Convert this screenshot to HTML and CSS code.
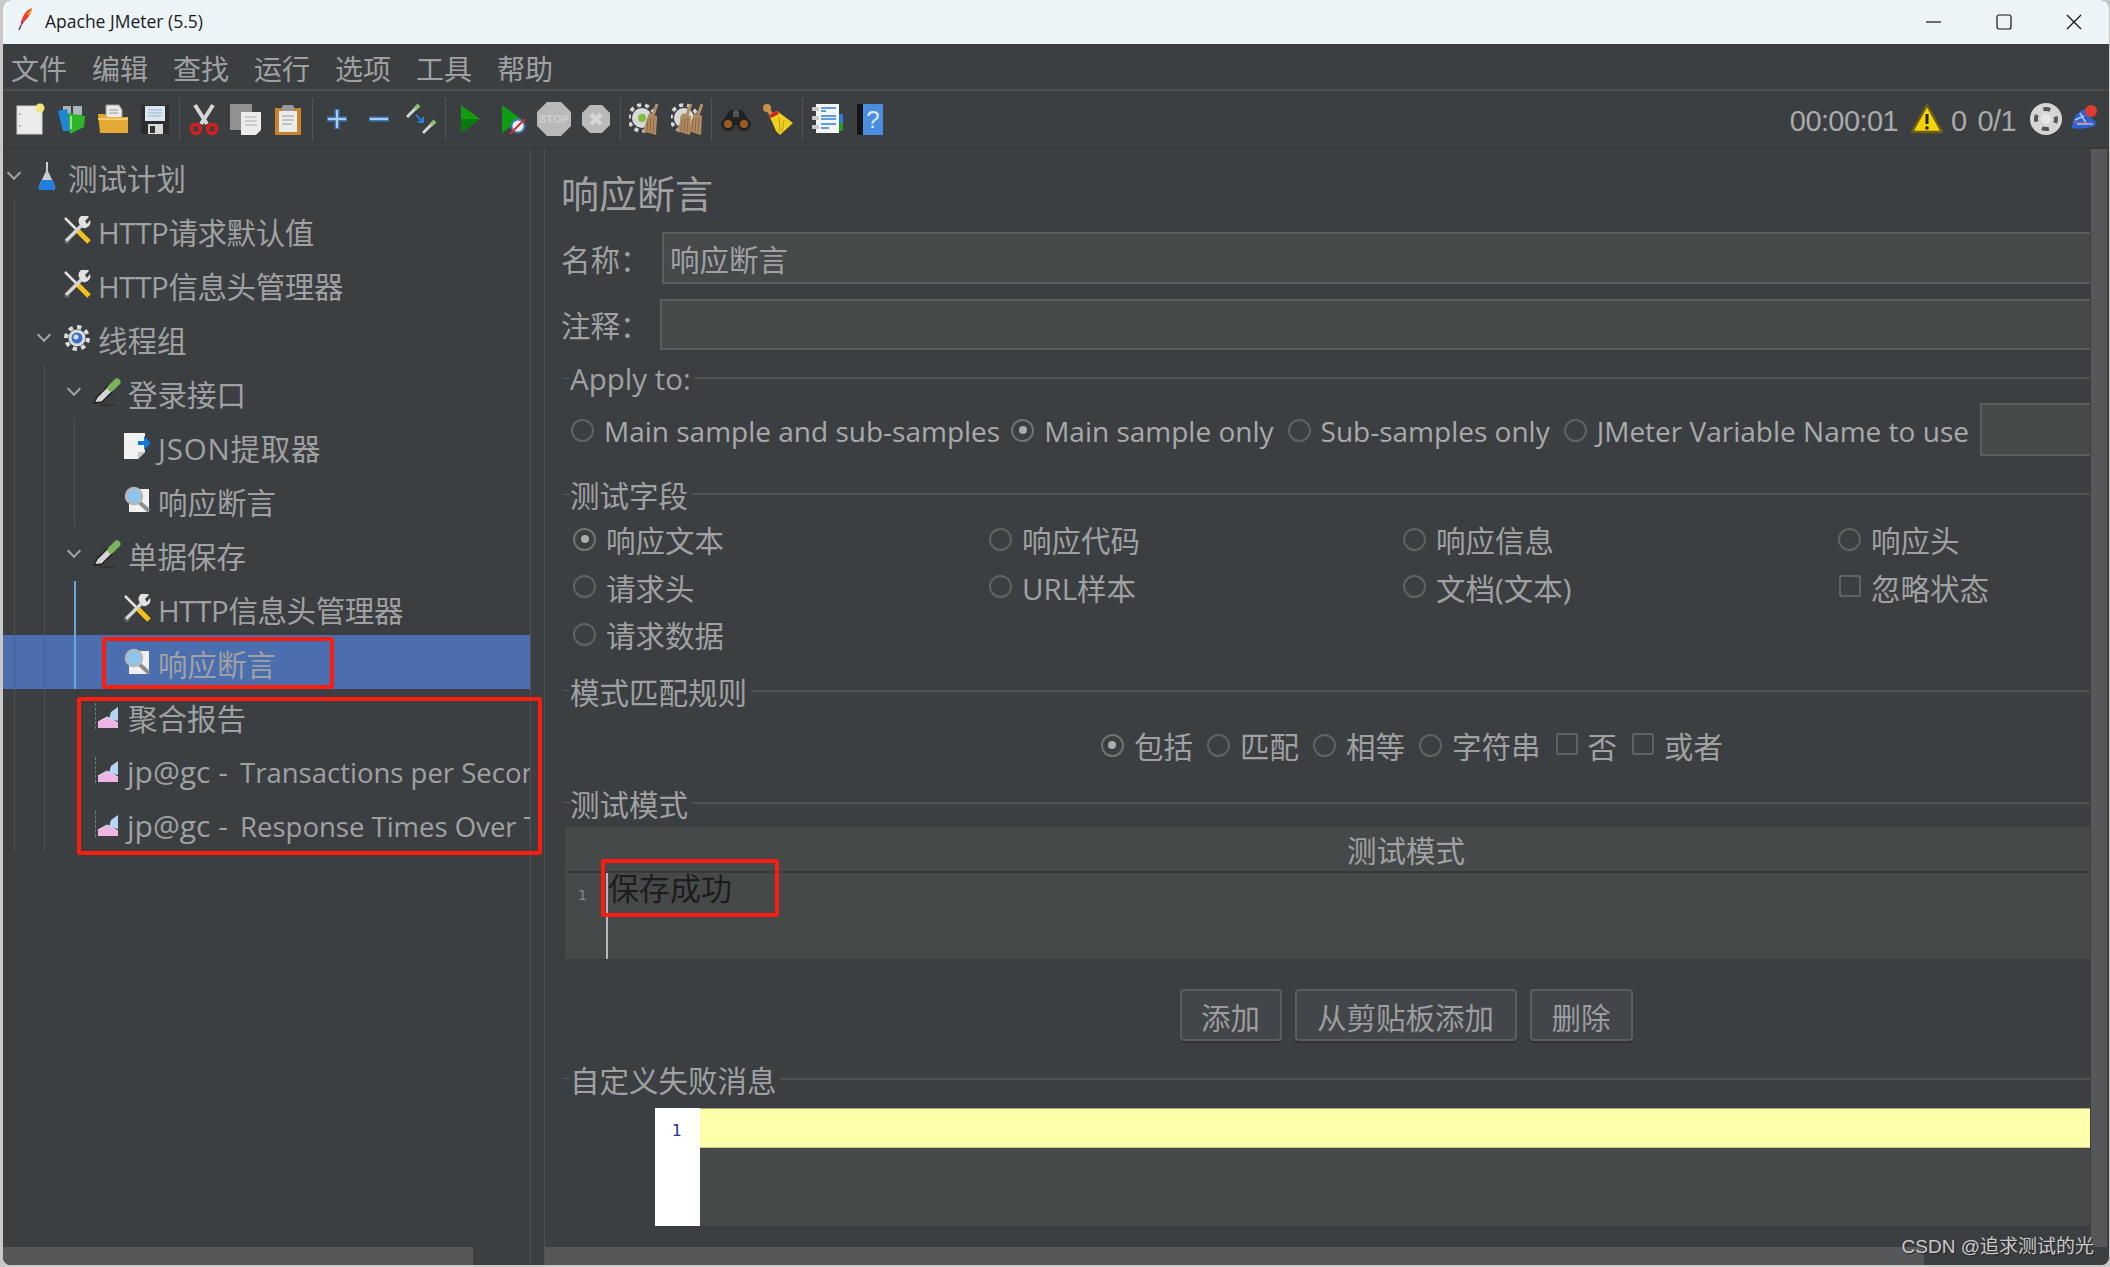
FILE: index.html
```html
<!DOCTYPE html>
<html lang="zh-CN">
<head>
    <meta charset="UTF-8">
    <title>Apache JMeter (5.5)</title>
    <link rel="stylesheet" href="styles.css">
</head>
<body>
    <!-- shared icons -->
    <svg class="defs" aria-hidden="true">
        <symbol id="i-wrench" viewBox="0 0 28 28">
            <path d="M2 2 L14 14" stroke="#e2e2e2" stroke-width="2.5"/>
            <path d="M13 13 L26 26" stroke="#f2c21a" stroke-width="5"/>
            <path d="M3 25 L19 9" stroke="#d4d4d4" stroke-width="3.5"/>
            <path d="M17 9 A6 6 0 0 1 26 1 L22 5 L24 8 L27 4 A6 6 0 0 1 20 12 Z" fill="#e2e2e2"/>
            <path d="M1 25 L4 28 L7 24" stroke="#666" stroke-width="1.5" fill="none"/>
        </symbol>
        <symbol id="i-pipette" viewBox="0 0 28 28">
            <path d="M1 25 L4 19 L15 8 L20 13 L9 24 Z" fill="#d5d5d5" stroke="#1f1f1f" stroke-width="1.5"/>
            <path d="M18 10 L24 4" stroke="#79b35c" stroke-width="7" stroke-linecap="round"/>
            <path d="M6 27 H22" stroke="#2f3133" stroke-width="2"/>
        </symbol>
        <symbol id="i-assert" viewBox="0 0 28 28">
            <path d="M6 3 H26 V26 H6 Z" fill="#f1f1f1"/>
            <path d="M15 15 L26 25" stroke="#8b8d8f" stroke-width="4"/>
            <circle cx="11" cy="10" r="8" fill="#8ec5ef" stroke="#b4b8bb" stroke-width="2.5"/>
        </symbol>
        <symbol id="i-graph" viewBox="0 0 22 22">
            <path d="M1 21 L1 15 L10 10 L21 16 L21 21 Z" fill="#eeb4e4"/>
            <path d="M1 15 L10 10 L21 16" stroke="#f6dcf1" stroke-width="1" fill="none"/>
            <path d="M12 12 L14 5 L21 0 L21 14 Z" fill="#b5d5f3"/>
        </symbol>
        <symbol id="i-gear-bg" viewBox="0 0 32 32">
            <circle cx="13" cy="15" r="10" fill="#d9d9d9"/>
            <circle cx="13" cy="15" r="13" fill="none" stroke="#d9d9d9" stroke-width="3.5" stroke-dasharray="4 4"/>
            <circle cx="13" cy="15" r="4" fill="#7fbf3a"/>
        </symbol>
        <symbol id="i-broom-small" viewBox="0 0 16 32">
            <path d="M14 1 L10 12" stroke="#b08e66" stroke-width="3"/>
            <path d="M6 10 L14 13 L13 32 L0 28 Z" fill="#b08a60"/>
            <path d="M5 16 L4 28 M8 15 L7 29 M11 15 L10 30" stroke="#8a6a45" stroke-width="1"/>
        </symbol>
    </svg>

    <div class="window">
        <header class="titlebar">
            <svg class="feather" viewBox="0 0 16 24">
                <path d="M15 1 C9 3 6 8 4 15 L7 15 C11 11 14 7 15 1 Z" fill="#e8402a"/>
                <path d="M15 1 C13 3 11 5 10 8 L13 8 C14 6 15 4 15 1 Z" fill="#f59a23"/>
                <path d="M4 15 L7 15 L4 19 Z" fill="#b3257a"/>
                <path d="M4 18 L2 23" stroke="#5b3a99" stroke-width="1.5"/>
            </svg>
            <span class="title-text">Apache JMeter (5.5)</span>
            <div class="win-controls">
                <svg class="win-btn" viewBox="0 0 16 16"><path d="M0 8 H15" stroke="#111" stroke-width="1.2"/></svg>
                <svg class="win-btn" viewBox="0 0 16 16"><rect x="1" y="1" width="14" height="14" rx="2" fill="none" stroke="#111" stroke-width="1.2"/></svg>
                <svg class="win-btn" viewBox="0 0 16 16"><path d="M1 1 L15 15 M15 1 L1 15" stroke="#111" stroke-width="1.2"/></svg>
            </div>
        </header>

        <nav class="menubar">
            <span>文件</span><span>编辑</span><span>查找</span><span>运行</span><span>选项</span><span>工具</span><span>帮助</span>
        </nav>

        <div class="toolbar">
            <div class="tb-group">
                <svg class="tb-icon" viewBox="0 0 32 32"><rect x="4" y="3" width="25" height="28" fill="#ececec" stroke="#cfcfcf"/><circle cx="7" cy="11" r="1" fill="#aaa"/><circle cx="7" cy="23" r="1" fill="#aaa"/><circle cx="27" cy="5" r="4.5" fill="#f3e67a"/></svg>
                <svg class="tb-icon" viewBox="0 0 32 32"><path d="M8 3 H16 V12 H8 Z M18 3 H27 V12 H18 Z" fill="#a9b6bd"/><path d="M3 8 L12 6 L16 28 L8 28 Z" fill="#1f86d6"/><path d="M13 10 L30 13 L29 24 L15 31 Z" fill="#2fb52a"/><path d="M16 13 V26" stroke="#bdf0a8" stroke-width="1.5"/></svg>
                <svg class="tb-icon" viewBox="0 0 32 32"><path d="M9 2 H22 L25 7 V16 H9 Z" fill="#e9e9e9" stroke="#9a9a9a"/><path d="M12 7 H21 M12 10 H21" stroke="#999"/><path d="M1 11 H8 L10 14 H31 V30 H3 Z" fill="#e5a935"/><path d="M1 16 H31" stroke="#f3cb6b" stroke-width="2"/></svg>
                <svg class="tb-icon" viewBox="0 0 32 32"><path d="M2 2 H30 V31 H2 Z" fill="#2d2d2d"/><rect x="6" y="3" width="20" height="15" fill="#dfe7ee"/><path d="M9 7 H23 M9 10 H23 M9 13 H23" stroke="#8fb3d9"/><rect x="9" y="21" width="15" height="10" fill="#d9d9d9"/><rect x="11" y="23" width="5" height="7" fill="#333"/></svg>
            </div>
            <span class="tb-sep"></span>
            <div class="tb-group">
                <svg class="tb-icon" viewBox="0 0 32 32"><path d="M7 2 L19 21 M25 2 L13 21" stroke="#d6d6d6" stroke-width="4"/><circle cx="8" cy="26" r="4.5" fill="none" stroke="#d81f1f" stroke-width="3.5"/><circle cx="24" cy="26" r="4.5" fill="none" stroke="#d81f1f" stroke-width="3.5"/></svg>
                <svg class="tb-icon" viewBox="0 0 32 32"><rect x="0" y="1" width="22" height="26" fill="#8f9192"/><path d="M11 9 H31 V27 L26 32 H11 Z" fill="#ececec"/><path d="M15 14 H27 M15 18 H27 M15 22 H27" stroke="#aaa"/></svg>
                <svg class="tb-icon" viewBox="0 0 32 32"><rect x="3" y="5" width="26" height="27" fill="#c9842b"/><rect x="7" y="8" width="18" height="21" fill="#ececec"/><rect x="10" y="2" width="12" height="6" rx="2" fill="#9a9a9a"/><path d="M10 13 H22 M10 17 H22 M10 21 H20" stroke="#999"/></svg>
            </div>
            <span class="tb-sep"></span>
            <div class="tb-group">
                <svg class="tb-icon" viewBox="0 0 32 32"><path d="M16 6 V26 M6 16 H26" stroke="#3f78b8" stroke-width="5"/><path d="M16 7 V25 M7 16 H25" stroke="#a9cdf0" stroke-width="2"/></svg>
                <svg class="tb-icon" viewBox="0 0 32 32"><path d="M6 16 H26" stroke="#3f78b8" stroke-width="5"/><path d="M7 16 H25" stroke="#a9cdf0" stroke-width="2"/></svg>
                <svg class="tb-icon" viewBox="0 0 32 32"><path d="M2 14 L12 4" stroke="#d5d5d5" stroke-width="3"/><path d="M10 6 L14 2" stroke="#8cc06a" stroke-width="4"/><path d="M18 30 L28 20" stroke="#d5d5d5" stroke-width="3"/><path d="M26 22 L30 18" stroke="#8cc06a" stroke-width="4"/><path d="M11 12 L18 19 M18 14 V19 H13" stroke="#2a7de1" stroke-width="2" fill="none"/></svg>
            </div>
            <span class="tb-sep"></span>
            <div class="tb-group">
                <svg class="tb-icon" viewBox="0 0 32 32"><path d="M7 2 L26 16 L7 30 Z" fill="#0f9d12"/><path d="M7 16 H26 L7 30 Z" fill="#0a7a0d"/></svg>
                <svg class="tb-icon" viewBox="0 0 32 32"><path d="M6 2 L25 16 L6 30 Z" fill="#0f9d12"/><circle cx="22" cy="23" r="6.5" fill="#e8f1fb" stroke="#3f78b8" stroke-width="2"/><path d="M14 31 L29 16" stroke="#e02a2a" stroke-width="2"/></svg>
                <svg class="tb-icon stop-icon" viewBox="0 0 34 34"><path d="M10 0 H24 L34 10 V24 L24 34 H10 L0 24 V10 Z" fill="#b9b9b9"/><text x="17" y="21" class="stop-text" text-anchor="middle">STOP</text></svg>
                <svg class="tb-icon" viewBox="0 0 32 32"><path d="M10 2 H22 L30 10 V22 L22 30 H10 L2 22 V10 Z" fill="#b9b9b9"/><path d="M11 11 L21 21 M21 11 L11 21" stroke="#d6d6d6" stroke-width="4"/></svg>
            </div>
            <span class="tb-sep"></span>
            <div class="tb-group">
                <svg class="tb-icon" viewBox="0 0 32 32"><use href="#i-gear-bg" width="32" height="32"/><use href="#i-broom-small" x="14" y="0" width="16" height="32"/></svg>
                <svg class="tb-icon" viewBox="0 0 32 32"><use href="#i-gear-bg" width="32" height="32"/><use href="#i-broom-small" x="6" y="0" width="16" height="32"/><use href="#i-broom-small" x="17" y="0" width="16" height="32"/></svg>
            </div>
            <span class="tb-sep"></span>
            <div class="tb-group">
                <svg class="tb-icon" viewBox="0 0 32 32"><path d="M10 7 H14 V14 H18 V7 H22 L31 20 A7 7 0 0 1 17 22 H15 A7 7 0 0 1 1 20 Z" fill="#222"/><rect x="13" y="8" width="6" height="6" fill="#555"/><circle cx="8" cy="21" r="4" fill="#9c5a22"/><circle cx="24" cy="21" r="4" fill="#9c5a22"/></svg>
                <svg class="tb-icon" viewBox="0 0 32 32"><circle cx="5" cy="5" r="4" fill="#c9944a"/><path d="M5 6 L11 13" stroke="#c9944a" stroke-width="4"/><path d="M7 12 L15 8 L31 20 L18 32 L14 28 Z" fill="#f0cf1f"/><path d="M7 12 L15 8 L17 11 L9 15 Z" fill="#d81f1f"/><path d="M17 14 L18 29 M22 17 L20 29" stroke="#b99b12"/></svg>
            </div>
            <span class="tb-sep"></span>
            <div class="tb-group">
                <svg class="tb-icon" viewBox="0 0 32 32"><rect x="5" y="1" width="23" height="29" fill="#f6f6f6"/><rect x="28" y="11" width="4" height="9" fill="#2a7de1"/><rect x="28" y="20" width="4" height="8" fill="#1e9a1e"/><rect x="1" y="4" width="7" height="4" rx="1" fill="#c9c9c9"/><rect x="1" y="13" width="7" height="4" rx="1" fill="#c9c9c9"/><rect x="1" y="22" width="7" height="4" rx="1" fill="#c9c9c9"/><path d="M10 5 H25 M10 8 H15 M10 13 H25 M10 16 H25 M10 21 H25 M10 25 H18" stroke="#2a7de1" stroke-width="1.5"/></svg>
                <svg class="tb-icon" viewBox="0 0 32 32"><rect x="4" y="1" width="26" height="31" rx="1" fill="#4b8ee0"/><rect x="4" y="1" width="6" height="31" fill="#151515"/><text x="20" y="25" class="help-text" text-anchor="middle">?</text></svg>
            </div>
            <div class="status">
                <span class="timer">00:00:01</span>
                <svg class="warn" viewBox="0 0 34 32"><path d="M17 2 L32 29 H2 Z" fill="#f2d30c" stroke="#6d5f10" stroke-width="2.5" stroke-linejoin="round"/><path d="M17 11 V21" stroke="#222" stroke-width="3"/><circle cx="17" cy="25" r="1.8" fill="#222"/></svg>
                <span class="count">0</span>
                <span class="count count-threads">0/1</span>
                <svg class="globe" viewBox="0 0 34 34"><circle cx="17" cy="17" r="16" fill="#d6d6d6"/><circle cx="17" cy="17" r="10" fill="none" stroke="#555" stroke-width="4" stroke-dasharray="7 8.7" stroke-dashoffset="3"/><circle cx="17" cy="17" r="5" fill="#e6e6e6"/></svg>
                <svg class="logger" viewBox="0 0 26 26"><path d="M1 24 C1 14 7 7 14 5 L18 12 L25 18 L24 22 Q10 26 1 24 Z" fill="#2e62d0"/><path d="M4 16 L13 12 M6 20 L22 20 M9 9 L15 19" stroke="#a9c6f2" stroke-width="1.6"/><path d="M3 18 L20 19" stroke="#d8506a" stroke-width="1"/><circle cx="20" cy="7" r="6" fill="#e03a2f"/></svg>
            </div>
        </div>

        <div class="main">
            <aside class="tree-pane">
                <div class="tree">
                    <span class="guide guide-root"></span>
                    <span class="guide guide-group"></span>
                    <span class="guide guide-login"></span>
                    <span class="guide guide-save"></span>

                    <div class="node">
                        <i class="chev"></i>
                        <svg class="node-icon" viewBox="0 0 28 28"><path d="M13 0 L15 0 L15 9 L22 24 Q23 27 20 28 H8 Q5 27 6 24 L13 9 Z" fill="#c9cdd1"/><path d="M9 18 H19 L22 24 Q23 27 20 28 H8 Q5 27 6 24 Z" fill="#1f7fe0"/></svg>
                        <span>测试计划</span>
                    </div>
                    <div class="node lvl1"><i class="chev none"></i><svg class="node-icon"><use href="#i-wrench"/></svg><span class="http-label">HTTP请求默认值</span></div>
                    <div class="node lvl1"><i class="chev none"></i><svg class="node-icon"><use href="#i-wrench"/></svg><span class="http-label">HTTP信息头管理器</span></div>
                    <div class="node lvl1">
                        <i class="chev"></i>
                        <svg class="node-icon" viewBox="0 0 28 28"><circle cx="14" cy="14" r="8.5" fill="#dcdcdc"/><circle cx="14" cy="14" r="11" fill="none" stroke="#dcdcdc" stroke-width="4" stroke-dasharray="4.3 4.3"/><circle cx="14" cy="14" r="5.5" fill="#3d6fc9"/><circle cx="13" cy="13" r="2.5" fill="#cfe0f7"/></svg>
                        <span>线程组</span>
                    </div>
                    <div class="node lvl2"><i class="chev"></i><svg class="node-icon"><use href="#i-pipette"/></svg><span>登录接口</span></div>
                    <div class="node lvl3">
                        <i class="chev none"></i>
                        <svg class="node-icon" viewBox="0 0 28 28"><path d="M1 1 H22 V20 L15 27 H1 Z" fill="#f1f1f1"/><path d="M15 27 L15 20 H22 Z" fill="#c4c4c4"/><path d="M15 9 H21 V4 L28 11 L21 18 V13 H15 Z" fill="#1478d4"/></svg>
                        <span class="json-label">JSON提取器</span>
                    </div>
                    <div class="node lvl3"><i class="chev none"></i><svg class="node-icon"><use href="#i-assert"/></svg><span>响应断言</span></div>
                    <div class="node lvl2"><i class="chev"></i><svg class="node-icon"><use href="#i-pipette"/></svg><span>单据保存</span></div>
                    <div class="node lvl3"><i class="chev none"></i><svg class="node-icon"><use href="#i-wrench"/></svg><span class="http-label">HTTP信息头管理器</span></div>
                    <div class="node lvl3 selected"><i class="chev none"></i><svg class="node-icon"><use href="#i-assert"/></svg><span>响应断言</span></div>
                    <div class="node lvl2 listener"><i class="chev none"></i><svg class="node-icon graph-icon"><use href="#i-graph"/></svg><span>聚合报告</span></div>
                    <div class="node lvl2 listener"><i class="chev none"></i><svg class="node-icon graph-icon"><use href="#i-graph"/></svg><span class="latin-label"><em class="jp">jp@gc -</em> Transactions per Second</span></div>
                    <div class="node lvl2 listener"><i class="chev none"></i><svg class="node-icon graph-icon"><use href="#i-graph"/></svg><span class="latin-label"><em class="jp">jp@gc -</em> Response Times Over Time</span></div>
                </div>
                <div class="hscroll"><div class="hscroll-thumb tree-thumb"></div></div>
            </aside>

            <div class="divider"></div>

            <section class="panel">
                <div class="panel-body">
                    <div class="panel-inner">
                        <h2 class="panel-title">响应断言</h2>
                        <div class="field-row name-row">
                            <label>名称：</label>
                            <div class="text-input name-input">响应断言</div>
                        </div>
                        <div class="field-row note-row">
                            <label>注释：</label>
                            <div class="text-input note-input"></div>
                        </div>

                        <div class="legend legend-apply"><span>Apply to:</span></div>
                        <div class="apply-row">
                            <label class="opt"><i class="radio"></i>Main sample and sub-samples</label>
                            <label class="opt"><i class="radio on"></i>Main sample only</label>
                            <label class="opt"><i class="radio"></i>Sub-samples only</label>
                            <label class="opt"><i class="radio"></i>JMeter Variable Name to use</label>
                            <div class="text-input var-input"></div>
                        </div>

                        <div class="legend legend-field"><span>测试字段</span></div>
                        <div class="field-grid">
                            <label class="opt"><i class="radio on"></i>响应文本</label>
                            <label class="opt"><i class="radio"></i>响应代码</label>
                            <label class="opt"><i class="radio"></i>响应信息</label>
                            <label class="opt"><i class="radio"></i>响应头</label>
                            <label class="opt"><i class="radio"></i>请求头</label>
                            <label class="opt"><i class="radio"></i>URL样本</label>
                            <label class="opt"><i class="radio"></i>文档(文本)</label>
                            <label class="opt"><i class="check"></i>忽略状态</label>
                            <label class="opt"><i class="radio"></i>请求数据</label>
                        </div>

                        <div class="legend legend-rule"><span>模式匹配规则</span></div>
                        <div class="rule-row">
                            <label class="opt"><i class="radio on"></i>包括</label>
                            <label class="opt"><i class="radio"></i>匹配</label>
                            <label class="opt"><i class="radio"></i>相等</label>
                            <label class="opt"><i class="radio"></i>字符串</label>
                            <label class="opt"><i class="check"></i>否</label>
                            <label class="opt"><i class="check"></i>或者</label>
                        </div>

                        <div class="legend legend-pattern"><span>测试模式</span></div>
                        <div class="pattern-table">
                            <div class="pattern-head">测试模式</div>
                            <div class="pattern-body">
                                <span class="line-no">1</span>
                                <div class="pattern-text">保存成功</div>
                            </div>
                        </div>

                        <div class="btn-row">
                            <button class="btn btn-add">添加</button>
                            <button class="btn btn-clip">从剪贴板添加</button>
                            <button class="btn btn-del">删除</button>
                        </div>

                        <div class="legend legend-msg"><span>自定义失败消息</span></div>
                        <div class="msg-editor">
                            <div class="msg-gutter">1</div>
                            <div class="msg-area"><div class="msg-line"></div></div>
                        </div>
                    </div>
                    <div class="vscroll"></div>
                </div>
                <div class="hscroll"><div class="hscroll-thumb panel-thumb"></div></div>
            </section>
        </div>

        <!-- annotations drawn over the screenshot -->
        <div class="mark mark-node"></div>
        <div class="mark mark-listeners"></div>
        <div class="mark mark-pattern"></div>
        <div class="watermark">CSDN @追求测试的光</div>
    </div>
</body>
</html>
```

FILE: styles.css
```css
* {
    box-sizing: border-box;
}
body {
    margin: 0;
    height: 1267px;
    overflow: hidden;
    background-color: #c9c9c9;
    font-family: "Open Sans", "Noto Sans CJK SC", sans-serif;
    color: #9fa1a3;
}
.defs {
    position: absolute;
    width: 0;
    height: 0;
}
.window {
    position: relative;
    width: 2106px;
    height: 1265px;
    margin-left: 3px;
    display: flex;
    flex-direction: column;
    background-color: #3c3f41;
    border-radius: 8px;
    overflow: hidden;
}

/* title bar */
.titlebar {
    height: 44px;
    flex: none;
    display: flex;
    align-items: center;
    padding-left: 14px;
    background-color: #edf4f8;
    color: #1a1a1a;
}
.feather {
    width: 16px;
    height: 24px;
    margin-right: 12px;
    margin-top: -6px;
}
.title-text {
    font-size: 17.5px;
    margin-top: -3px;
}
.win-controls {
    margin-left: auto;
    display: flex;
    gap: 54px;
    margin-right: 27px;
}
.win-btn {
    width: 16px;
    height: 16px;
}

/* menu */
.menubar {
    height: 47px;
    flex: none;
    display: flex;
    align-items: center;
    gap: 25px;
    padding-left: 8px;
    padding-top: 2px;
    font-size: 28px;
    border-bottom: 2px solid #4b4d4f;
    color: #9fa1a3;
}

/* toolbar */
.toolbar {
    height: 58px;
    flex: none;
    display: flex;
    align-items: center;
    padding-left: 10px;
    border-bottom: 2px solid #37393b;
}
.tb-group {
    display: flex;
    gap: 10px;
}
.tb-icon {
    width: 32px;
    height: 32px;
}
.stop-icon {
    width: 34px;
    height: 34px;
    margin: -1px -1px;
}
.stop-text {
    font-size: 11px;
    font-weight: 700;
    fill: #cfcfcf;
    font-family: "Liberation Sans", sans-serif;
}
.help-text {
    font-size: 24px;
    fill: #dcecff;
    font-family: "Liberation Sans", sans-serif;
}
.tb-sep {
    width: 1px;
    height: 42px;
    margin: 0 8px;
    background-color: #525456;
}
.status {
    margin-left: auto;
    display: flex;
    align-items: center;
    font-family: "Liberation Sans", sans-serif;
    font-size: 29px;
    letter-spacing: -0.6px;
    color: #a9abad;
    padding-right: 12px;
}
.timer,
.count {
    margin-top: 5px;
}
.timer {
    margin-right: 12px;
}
.warn {
    width: 34px;
    height: 32px;
    margin-right: 7px;
}
.count-threads {
    margin-left: 11px;
    margin-right: 13px;
}
.globe {
    width: 34px;
    height: 34px;
    margin-right: 8px;
}
.logger {
    width: 26px;
    height: 26px;
    margin-top: -4px;
}

/* split */
.main {
    flex: 1;
    display: flex;
    min-height: 0;
}
.tree-pane {
    width: 527px;
    flex: none;
    display: flex;
    flex-direction: column;
}
.tree {
    position: relative;
    flex: 1;
    overflow: hidden;
    min-height: 0;
}
.guide {
    position: absolute;
    width: 1px;
    background-color: #505355;
}
.guide-root {
    left: 11px;
    top: 51px;
    height: 651px;
}
.guide-group {
    left: 41px;
    top: 216px;
    height: 486px;
}
.guide-login {
    left: 71px;
    top: 270px;
    height: 107px;
}
.guide-save {
    left: 71px;
    top: 432px;
    height: 108px;
    width: 2px;
    background-color: #6aa7e0;
    z-index: 2;
}
.node {
    position: relative;
    height: 54px;
    display: flex;
    align-items: center;
    font-size: 29.5px;
    white-space: nowrap;
}
.node span {
    margin-top: 3px;
}
.node .http-label {
    letter-spacing: -0.4px;
}
.node .json-label {
    letter-spacing: 0.8px;
}
.node .latin-label {
    font-size: 27.5px;
    margin-left: -1px;
}
.jp {
    font-style: normal;
    font-size: 30px;
    margin-right: 5px;
}
.lvl1 {
    padding-left: 30px;
}
.lvl2 {
    padding-left: 60px;
}
.lvl3 {
    padding-left: 90px;
}
.selected {
    background-color: #4b6eaf;
    background-image: linear-gradient(90deg, transparent 11px, #3f5f9a 11px, #3f5f9a 12px, transparent 12px, transparent 41px, #3f5f9a 41px, #3f5f9a 42px, transparent 42px);
}
.chev {
    width: 22px;
    height: 22px;
    margin-right: 8px;
    flex: none;
    position: relative;
}
.chev::before {
    content: "";
    position: absolute;
    left: 6px;
    top: 3px;
    width: 8px;
    height: 8px;
    border-right: 2.5px solid #a3a5a7;
    border-bottom: 2.5px solid #a3a5a7;
    transform: rotate(45deg);
}
.chev.none::before {
    display: none;
}
.node-icon {
    width: 28px;
    height: 28px;
    margin-right: 7px;
    flex: none;
}
.graph-icon {
    width: 22px;
    height: 22px;
    margin-left: 4px;
    margin-right: 9px;
}
.listener::before {
    content: "";
    position: absolute;
    left: 92px;
    top: 14px;
    height: 26px;
    border-left: 1px dashed #77797b;
}
.listener .graph-icon {
    margin-top: 4px;
}
.hscroll {
    height: 18px;
    flex: none;
    background-color: #3c3f41;
}
.hscroll-thumb {
    height: 100%;
    background-color: #565758;
}
.tree-thumb {
    width: 470px;
}
.panel-thumb {
    width: 1379px;
}
.divider {
    width: 15px;
    flex: none;
    border-left: 1px solid #4f5153;
    border-right: 1px solid #4f5153;
}

/* right panel */
.panel {
    flex: 1;
    min-width: 0;
    display: flex;
    flex-direction: column;
}
.panel-body {
    flex: 1;
    min-height: 0;
    display: flex;
}
.panel-inner {
    flex: 1;
    min-width: 0;
    overflow: hidden;
    padding-left: 16px;
}
.vscroll {
    width: 16px;
    flex: none;
    background-color: #565758;
    margin-left: 1px;
    margin-right: 2px;
}
.panel-inner > * {
    width: 1690px;
}
.panel-title {
    margin: 0;
    padding-top: 19px;
    height: 69px;
    font-size: 38px;
    line-height: 50px;
    font-weight: 400;
}
.field-row {
    display: flex;
    align-items: center;
    font-size: 29.5px;
}
.field-row label {
    width: 101px;
    flex: none;
}
.name-row {
    height: 52px;
    margin-top: 14px;
}
.note-row {
    height: 51px;
    margin-top: 15px;
}
.note-row label {
    width: 99px;
}
.text-input {
    flex: 1;
    height: 100%;
    border: 2px solid #5b5e60;
    background-color: #45494a;
    padding-left: 6px;
    padding-top: 2px;
    line-height: 48px;
    font-size: 29.5px;
}
.legend {
    height: 40px;
    display: flex;
    align-items: center;
    font-size: 29.5px;
    padding-left: 2px;
}
.legend span {
    margin-top: -5px;
}
.legend::before {
    content: "";
    width: 7px;
    height: 1px;
    margin-bottom: 6px;
    background-color: #55585a;
    flex: none;
}
.legend::after {
    content: "";
    flex: 1;
    height: 2px;
    margin-left: 4px;
    margin-bottom: 6px;
    background-color: #4f5153;
}
.legend-apply {
    margin-top: 11px;
}
.legend-field {
    margin-top: 21px;
}
.legend-rule {
    margin-top: 14px;
}
.legend-pattern {
    margin-top: 16px;
}
.legend-msg {
    margin-top: 21px;
}
.opt {
    display: flex;
    align-items: center;
    white-space: nowrap;
    font-size: 29.5px;
    padding-bottom: 2px;
}
.radio {
    width: 23px;
    height: 23px;
    margin-right: 10px;
    margin-top: -1px;
    border-radius: 50%;
    border: 2px solid #5f6364;
    background-color: #3c3f41;
    flex: none;
    display: flex;
    align-items: center;
    justify-content: center;
}
.radio.on {
    border-color: #707374;
}
.radio.on::before {
    content: "";
    width: 8px;
    height: 8px;
    border-radius: 50%;
    background-color: #a9abad;
}
.check {
    width: 22px;
    height: 22px;
    margin-right: 10px;
    margin-top: -3px;
    margin-left: 1px;
    border: 2px solid #5f6364;
    border-radius: 2px;
    flex: none;
}
.apply-row {
    height: 53px;
    margin-top: 2px;
    display: flex;
    align-items: center;
    gap: 14px;
    padding-left: 10px;
}
.apply-row .opt {
    font-size: 28px;
    color: #a8aaac;
    padding-bottom: 0;
    padding-top: 2px;
}
.apply-row .opt:first-child {
    margin-right: -3px;
}
.var-input {
    flex: none;
    width: 300px;
    height: 53px;
    margin-left: -3px;
}
.field-grid {
    display: grid;
    grid-template-columns: 416px 414px 435px 1fr;
    grid-auto-rows: 47.5px;
    padding-left: 12px;
}
.rule-row {
    height: 46px;
    margin-top: 10px;
    display: flex;
    align-items: center;
    justify-content: center;
    gap: 14px;
    padding-left: 12px;
}
.pattern-table {
    margin-top: 1px;
    margin-left: 4px;
    width: 1682px;
    height: 132px;
    background-color: #45494a;
}
.pattern-head {
    height: 46px;
    text-align: center;
    font-size: 29.5px;
    line-height: 48px;
    border-bottom: 2px solid #37393b;
}
.pattern-body {
    display: flex;
    height: 86px;
}
.line-no {
    width: 43px;
    flex: none;
    border-right: 2px solid #b5b7b8;
    padding: 8px 0 0 13px;
    font-size: 14px;
    line-height: 28px;
    color: #85888a;
    font-family: "DejaVu Sans", sans-serif;
}
.pattern-text {
    font-size: 31px;
    line-height: 30px;
    color: #1c1c1c;
}
.btn-row {
    margin-top: 30px;
    height: 52px;
    display: flex;
    justify-content: center;
    gap: 13px;
}
.btn {
    height: 52px;
    font: inherit;
    font-size: 29.5px;
    color: #9b9d9f;
    border: 2px solid #5b5e60;
    border-radius: 4px;
    background-color: #42464a;
    box-shadow: 0 2px 1px #2f3133;
    padding: 3px 0 0;
}
.btn-add {
    width: 102px;
}
.btn-clip {
    width: 222px;
}
.btn-del {
    width: 103px;
}
.msg-editor {
    margin-top: 6px;
    margin-left: 94px;
    height: 118px;
    display: flex;
}
.msg-gutter {
    width: 45px;
    flex: none;
    background-color: #fff;
    color: #23328f;
    font-family: "DejaVu Sans Mono", monospace;
    font-size: 16px;
    line-height: 46px;
    padding-right: 2px;
    text-align: center;
}
.msg-area {
    flex: 1;
    background-color: #45494a;
}
.msg-line {
    height: 40px;
    background-color: #ffffaa;
    border-top: 1px solid #a9a97a;
    border-bottom: 1px solid #c9c98a;
}

/* red annotation boxes */
.mark {
    position: absolute;
    border: 4px solid #fb1d10;
    border-radius: 3px;
    z-index: 5;
}
.mark-node {
    left: 99px;
    top: 637px;
    width: 232px;
    height: 52px;
}
.mark-listeners {
    left: 74px;
    top: 697px;
    width: 465px;
    height: 158px;
}
.mark-pattern {
    left: 598px;
    top: 859px;
    width: 178px;
    height: 58px;
}
.watermark {
    position: absolute;
    right: 15px;
    top: 1234px;
    z-index: 6;
    font-family: "Liberation Sans", "Noto Sans CJK SC", sans-serif;
    font-size: 19px;
    line-height: 26px;
    color: #c9cbcd;
    text-shadow: 1px 1px 1px #222;
}
```
